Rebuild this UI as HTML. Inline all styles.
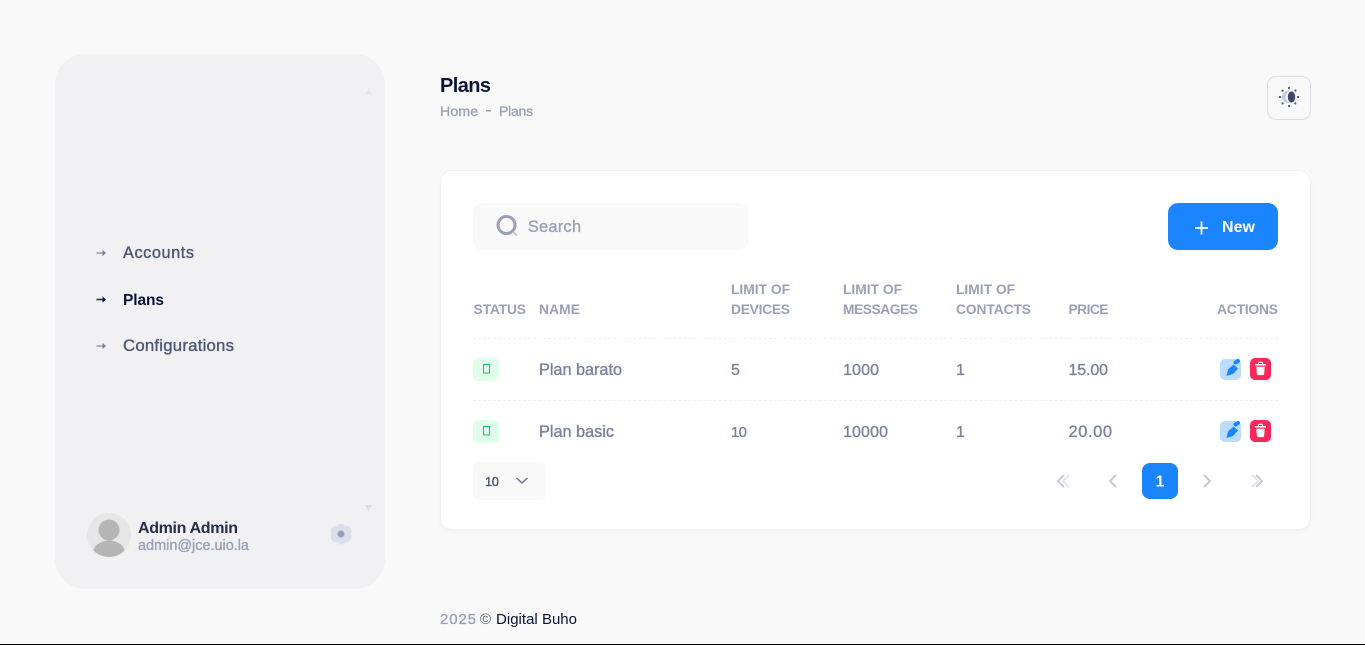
<!DOCTYPE html>
<html lang="en">
<head>
<meta charset="utf-8">
<title>Plans</title>
<style>
html,body{margin:0;padding:0;width:1365px;height:645px;overflow:hidden;background:#f9f9f9}
.b{position:absolute;box-sizing:border-box}
svg{position:absolute;left:0;top:0}
text{font-family:"Liberation Sans",sans-serif}
.m{stroke-width:.35px;paint-order:stroke}
.th{font-size:13.8px;font-weight:700;fill:#99a1b7}
.td{font-size:16px;fill:#78829d;stroke:#78829d}
</style>
</head>
<body>
<div class="b" style="left:55px;top:54px;width:330px;height:535px;background:#f1f1f4;border-radius:30px"></div>
<div class="b" style="left:440px;top:170px;width:871px;height:360px;background:#fff;border:1px solid #f1f1f4;border-radius:12px;box-shadow:0 3px 4px rgba(0,0,0,.03)"></div>
<div class="b" style="left:1267px;top:76px;width:44px;height:44px;border:1px solid #dbdfe9;border-radius:9px;background:#f9f9f9"></div>
<div class="b" style="left:473px;top:203px;width:275px;height:47px;background:#f9f9f9;border-radius:10px"></div>
<div class="b" style="left:1168px;top:203px;width:110px;height:47px;background:#1b84ff;border-radius:10px"></div>
<div class="b" style="left:473px;top:462px;width:73px;height:38px;background:#f9f9f9;border-radius:6px"></div>
<div class="b" style="left:1142px;top:463px;width:36px;height:36px;background:#1b84ff;border-radius:8px"></div>
<div class="b" style="left:473px;top:358px;width:26px;height:23px;background:#dfffea;border-radius:5px"></div>
<div class="b" style="left:473px;top:420px;width:26px;height:23px;background:#dfffea;border-radius:5px"></div>
<div class="b" style="left:473px;top:338px;width:805px;height:0;border-top:1px dashed #f1f1f4"></div>
<div class="b" style="left:473px;top:400px;width:805px;height:0;border-top:1px dashed #f1f1f4"></div>
<div class="b" style="left:0;top:644px;width:1365px;height:1px;background:#000"></div>

<svg width="1365" height="645" viewBox="0 0 1365 645" xmlns="http://www.w3.org/2000/svg">
  <!-- sidebar scroll arrows -->
  <path d="M368.500 88l3.500 6.500h-7z" fill="#e4e6ef"/>
  <path d="M365 505h7l-3.500 6.500z" fill="#dbdfe9"/>

  <!-- nav arrows -->
  <path d="M96.500 253h7" stroke="#99a1b7" stroke-width="1.600"/>
  <path d="M102.500 249.800l3.500 3.200-3.500 3.200z" fill="#78829d"/>
  <path d="M96.500 346h7" stroke="#99a1b7" stroke-width="1.600"/>
  <path d="M102.500 342.800l3.500 3.200-3.500 3.200z" fill="#78829d"/>
  <path d="M96.500 299.500h7" stroke="#252f4a" stroke-width="1.600"/>
  <path d="M102.500 296.300l3.500 3.200-3.500 3.200z" fill="#071437"/>

  <!-- nav text -->
  <text class="m" x="123" y="258" font-size="16.300" fill="#4b5675" stroke="#4b5675" textLength="71">Accounts</text>
  <text x="123" y="305" font-size="15.500" font-weight="700" fill="#071437" textLength="41">Plans</text>
  <text class="m" x="123" y="351" font-size="16.800" fill="#4b5675" stroke="#4b5675" textLength="111">Configurations</text>

  <!-- avatar -->
  <defs><clipPath id="av"><circle cx="109" cy="535" r="22"/></clipPath></defs>
  <circle cx="109" cy="535" r="22" fill="#e6e6e6"/>
  <g clip-path="url(#av)">
    <circle cx="109" cy="530" r="10.500" fill="#b5b5b5"/>
    <ellipse cx="109" cy="553" rx="16" ry="12.500" fill="#b5b5b5"/>
  </g>
  <text x="138" y="533" font-size="16" font-weight="700" fill="#252f4a" textLength="100">Admin Admin</text>
  <text class="m" x="138" y="550" font-size="14.500" fill="#99a1b7" stroke="#99a1b7" textLength="111">admin@jce.uio.la</text>

  <!-- gear -->
  <g fill="#dbdfe9">
    <circle cx="341" cy="528.500" r="5"/><circle cx="341" cy="539.500" r="5"/>
    <circle cx="335.500" cy="531" r="5"/><circle cx="346.500" cy="531" r="5"/>
    <circle cx="335.500" cy="537" r="5"/><circle cx="346.500" cy="537" r="5"/>
    <circle cx="341" cy="534" r="6"/>
  </g>
  <circle cx="341" cy="534" r="3.500" fill="#99a1b7"/>

  <!-- header -->
  <text x="440" y="92" font-size="20" font-weight="700" fill="#071437" textLength="51">Plans</text>
  <text class="m" x="440" y="116" font-size="14" fill="#99a1b7" stroke="#99a1b7" textLength="38">Home</text>
  <rect x="486" y="110" width="5" height="1.500" fill="#99a1b7"/>
  <text class="m" x="499" y="116" font-size="14" fill="#99a1b7" stroke="#99a1b7" textLength="34">Plans</text>

  <!-- theme icon -->
  <circle cx="1288" cy="97" r="6" fill="#c4cada"/>
  <circle cx="1291" cy="97" r="5.500" fill="#f9f9f9"/>
  <ellipse cx="1291.500" cy="97" rx="3.700" ry="5.600" fill="#3f4a6b"/>
  <g fill="#4b5675">
    <circle cx="1289" cy="88" r="1.100"/><circle cx="1289" cy="106" r="1.100"/>
    <circle cx="1280" cy="97" r="1.100"/><circle cx="1298" cy="97" r="1.100"/>
    <circle cx="1282.600" cy="90.600" r="1.100"/><circle cx="1295.400" cy="90.600" r="1.100"/>
    <circle cx="1282.600" cy="103.400" r="1.100"/><circle cx="1295.400" cy="103.400" r="1.100"/>
  </g>

  <!-- search -->
  <circle cx="506.500" cy="225" r="8.500" fill="none" stroke="#99a1b7" stroke-width="3"/>
  <path d="M513 232l4 3.500" stroke="#c4cada" stroke-width="2"/>
  <text class="m" x="528" y="232" font-size="16.300" fill="#99a1b7" stroke="#99a1b7" textLength="53">Search</text>

  <!-- new -->
  <path d="M1195 228h13M1201.500 221.500v13" stroke="#fff" stroke-width="1.800"/>
  <text x="1222" y="232" font-size="16" font-weight="700" fill="#fff" textLength="33">New</text>

  <!-- table head -->
  <text class="th" x="473.500" y="314" textLength="52.500">STATUS</text>
  <text class="th" x="539" y="314" textLength="41">NAME</text>
  <text class="th" x="731" y="294" textLength="59">LIMIT OF</text>
  <text class="th" x="731" y="314" textLength="59">DEVICES</text>
  <text class="th" x="843" y="294" textLength="59">LIMIT OF</text>
  <text class="th" x="843" y="314" textLength="75">MESSAGES</text>
  <text class="th" x="956" y="294" textLength="59">LIMIT OF</text>
  <text class="th" x="956" y="314" textLength="75">CONTACTS</text>
  <text class="th" x="1068.500" y="314" textLength="40">PRICE</text>
  <text class="th" x="1217" y="314" textLength="61">ACTIONS</text>

  <!-- row 1 -->
  <rect x="483.500" y="364.500" width="6" height="8.500" fill="none" stroke="#17c653"/>
  <text class="td m" x="539" y="375" style="font-size:16.300px" textLength="83">Plan barato</text>
  <text class="td m" x="731" y="375">5</text>
  <text class="td m" x="843" y="375" textLength="36">1000</text>
  <text class="td m" x="956" y="375">1</text>
  <text class="td m" x="1068.500" y="375" textLength="39.500">15.00</text>

  <!-- row 2 -->
  <rect x="483.500" y="426.500" width="6" height="8.500" fill="none" stroke="#17c653"/>
  <text class="td m" x="539" y="437" style="font-size:16.300px" textLength="75">Plan basic</text>
  <text class="td m" x="731" y="437" style="font-size:15px" textLength="16">10</text>
  <text class="td m" x="843" y="437" textLength="45">10000</text>
  <text class="td m" x="956" y="437">1</text>
  <text class="td m" x="1068.500" y="437" style="font-size:16.500px" textLength="43.500">20.00</text>

  <!-- actions row 1 -->
  <rect x="1220" y="359" width="21" height="21" rx="5" fill="#bcdcff"/>
  <path d="M1226.500 376l1.500-6.500 5.500-5 4.500 4-5 5.500z" fill="#1b84ff"/>
  <path d="M1235.500 362.500l2.500-1.500" stroke="#1b84ff" stroke-width="4" stroke-linecap="round"/>
  <rect x="1250" y="358" width="21" height="22" rx="5" fill="#f8285a"/>
  <path d="M1255 364h11v1.500h-11z" fill="#fff"/>
  <path d="M1258.500 364v-1q0-.8.8-.8h2.400q.8 0 .8.8v1" fill="none" stroke="#fff" stroke-width="1"/>
  <path d="M1256.300 366.800h8.400l-.6 7.300q-.1 1-1.300 1h-4.600q-1.200 0-1.300-1z" fill="#fff"/>

  <!-- actions row 2 -->
  <rect x="1220" y="421" width="21" height="21" rx="5" fill="#bcdcff"/>
  <path d="M1226.500 438l1.500-6.500 5.500-5 4.500 4-5 5.500z" fill="#1b84ff"/>
  <path d="M1235.500 424.500l2.500-1.500" stroke="#1b84ff" stroke-width="4" stroke-linecap="round"/>
  <rect x="1250" y="420" width="21" height="22" rx="5" fill="#f8285a"/>
  <path d="M1255 426h11v1.500h-11z" fill="#fff"/>
  <path d="M1258.500 426v-1q0-.8.8-.8h2.400q.8 0 .8.8v1" fill="none" stroke="#fff" stroke-width="1"/>
  <path d="M1256.300 428.800h8.400l-.6 7.300q-.1 1-1.300 1h-4.600q-1.200 0-1.300-1z" fill="#fff"/>

  <!-- page size -->
  <text class="m" x="485" y="486" font-size="13" fill="#4b5675" stroke="#4b5675" textLength="14">10</text>
  <path d="M516.500 478l5.500 5 5.500-5" fill="none" stroke="#78829d" stroke-width="1.600"/>

  <!-- pagination -->
  <g fill="none" stroke-width="2">
    <path d="M1069 475l-6 6 6 6" stroke="#e4e6ef"/>
    <path d="M1064 475l-6 6 6 6" stroke="#c4cada"/>
    <path d="M1116 475l-6 6 6 6" stroke="#c4cada"/>
    <path d="M1204 475l6 6-6 6" stroke="#c4cada"/>
    <path d="M1252 475l6 6-6 6" stroke="#e4e6ef"/>
    <path d="M1256 475l6 6-6 6" stroke="#c4cada"/>
  </g>
  <text x="1160" y="486.500" font-size="16" font-weight="700" fill="#fff" text-anchor="middle">1</text>

  <!-- footer -->
  <text class="m" x="440" y="624" font-size="15" fill="#99a1b7" stroke="#99a1b7" textLength="36">2025</text>
  <text x="480" y="624" font-size="15" fill="#4b5675">©</text>
  <text x="496" y="624" font-size="15" fill="#071437" textLength="81">Digital Buho</text>
</svg>
</body>
</html>
